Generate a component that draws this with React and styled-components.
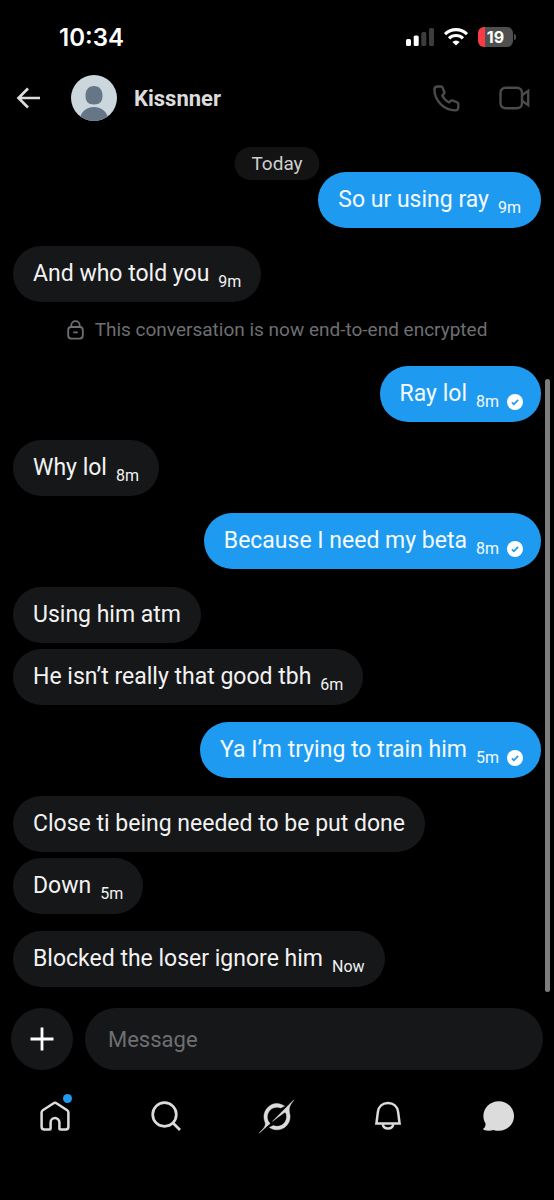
import { useState } from "react";
import styled, { createGlobalStyle, css } from "styled-components";

const GlobalStyle = createGlobalStyle`
  * {
    box-sizing: border-box;
  }

  body {
    margin: 0;
    background-color: #000;
    color: #e7e9ea;
    font-family: Roboto, "Liberation Sans", sans-serif;
  }

  button {
    display: flex;
    align-items: center;
    justify-content: center;
    padding: 0;
    border: none;
    background: none;
    color: inherit;
    cursor: pointer;
  }

  svg {
    display: block;
    flex-shrink: 0;
  }
`;

const Screen = styled.div`
  display: flex;
  flex-direction: column;
  min-height: 100vh;
`;

const StatusBar = styled.div`
  display: flex;
  align-items: center;
  justify-content: space-between;
  height: 74px;
  padding: 0 38px 0 59px;
  color: #fff;
`;

const Clock = styled.time`
  font-family: Inter, sans-serif;
  font-size: 24px;
  font-weight: 600;
`;

const StatusIcons = styled.div`
  display: flex;
  align-items: center;
  gap: 10px;
`;

const Battery = styled.div`
  display: flex;
  align-items: center;
  gap: 1px;
`;

const BatteryBody = styled.div`
  width: 35px;
  height: 20px;
  border-radius: 6px;
  background: linear-gradient(to right, #fb3b44 ${(props) => props.$level}%, #4f4f4f ${(props) => props.$level}%);
  font-family: Inter, sans-serif;
  font-size: 16px;
  font-weight: 700;
  line-height: 20px;
  text-align: center;
`;

const BatteryTip = styled.div`
  width: 2px;
  height: 6px;
  border-radius: 0 2px 2px 0;
  background-color: #4f4f4f;
`;

const Header = styled.header`
  display: flex;
  align-items: center;
  height: 48px;
  padding: 0 24px 0 16px;
`;

const Avatar = styled.div`
  width: 46px;
  height: 46px;
  margin: 0 17px 0 30px;
  border-radius: 50%;
  overflow: hidden;
`;

const Name = styled.h1`
  flex: 1;
  margin: 0;
  font-size: 22px;
  font-weight: 700;
  color: #dcdcdc;
`;

const HeaderActions = styled.div`
  display: flex;
  gap: 39px;
  color: #4b4b4b;
`;

const Chat = styled.main`
  position: relative;
  flex: 1;
  padding: 50px 13px 3px;
`;

const DayPill = styled.div`
  position: absolute;
  top: 25px;
  left: 50%;
  transform: translateX(-50%);
  padding: 0 17px;
  border-radius: 17px;
  background-color: #131314;
  color: #cfcfcf;
  font-size: 19px;
  line-height: 33px;
`;

const ScrollThumb = styled.div`
  position: absolute;
  top: 29%;
  right: 4px;
  bottom: 16px;
  width: 5px;
  border-radius: 3px;
  background-color: #7d7d7d;
`;

const Group = styled.div`
  display: flex;
  flex-direction: column;
  gap: 6px;
  align-items: ${(props) => (props.$mine ? "flex-end" : "flex-start")};
  margin-bottom: ${(props) => (props.$mine ? 18 : 17)}px;
`;

const Bubble = styled.div`
  display: flex;
  align-items: flex-end;
  gap: 9px;
  padding: 0 20px;
  border-radius: 28px;
  background-color: #161719;
  color: #f2f2f2;

  ${(props) =>
    props.$mine &&
    css`
      background-color: #1e9bf0;
      color: #f4faff;
    `}

  ${(props) =>
    props.$checked &&
    css`
      padding-right: 18px;
    `}
`;

const Text = styled.p`
  margin: 0;
  padding: 14px 0;
  font-size: 23px;
  line-height: 28px;
`;

const Meta = styled.span`
  display: flex;
  align-items: center;
  gap: 8px;
  padding-bottom: 10px;
  font-size: 16px;
  line-height: 20px;
`;

const Notice = styled.p`
  display: flex;
  align-items: center;
  justify-content: center;
  gap: 11px;
  margin: 0 0 25px;
  color: #6d6f72;
  font-size: 19px;
  line-height: 22px;
`;

const Composer = styled.form`
  display: flex;
  gap: 12px;
  padding: 0 11px;
`;

const AddButton = styled.button`
  flex-shrink: 0;
  width: 62px;
  height: 62px;
  border-radius: 50%;
  && {
    background-color: #161719;
  }
`;

const MessageInput = styled.input`
  flex: 1;
  min-width: 0;
  height: 62px;
  padding: 0 23px;
  border: none;
  border-radius: 31px;
  outline: none;
  background-color: #161719;
  color: #f2f2f2;
  font-family: inherit;
  font-size: 22px;

  &::placeholder {
    color: #6d6f72;
    opacity: 1;
  }
`;

const TabBar = styled.nav`
  display: grid;
  grid-template-columns: repeat(5, 1fr);
  padding: 26px 0 64px;
  color: #dcdcdc;
`;

const Tab = styled.button`
  height: 40px;
`;

const TabIcon = styled.span`
  position: relative;
`;

const Dot = styled.span`
  position: absolute;
  top: -7px;
  right: -2px;
  width: 9px;
  height: 9px;
  border-radius: 50%;
  background-color: #1e9bf0;
`;

const SignalIcon = () => (
  <svg width="28" height="18" viewBox="0 0 28 18" fill="#fff">
    <rect x="0" y="11" width="5" height="7" rx="1.5" />
    <rect x="7.7" y="7.5" width="5" height="10.5" rx="1.5" />
    <rect x="15.3" y="4" width="5" height="14" rx="1.5" fill="#3c3c3c" />
    <rect x="23" y="0" width="5" height="18" rx="1.5" fill="#3c3c3c" />
  </svg>
);

const WifiIcon = () => (
  <svg width="24" height="18" viewBox="0 0 24 18" fill="none" stroke="#fff" strokeWidth="3.1">
    <path d="M1 6.2a15.6 15.6 0 0 1 22 0" />
    <path d="M5 10.4a10 10 0 0 1 14 0" />
    <path d="M12 17.6 8.3 13.9a5.3 5.3 0 0 1 7.4 0z" fill="#fff" stroke="none" />
  </svg>
);

const BackIcon = () => (
  <svg width="25" height="22" viewBox="0 0 25 22" fill="none" stroke="#dcdcdc" strokeWidth="2.7">
    <path d="M12 1.5 2.5 11l9.5 9.5M2.5 11H24" />
  </svg>
);

const AvatarIcon = () => (
  <svg width="46" height="46" viewBox="0 0 46 46">
    <rect width="46" height="46" fill="#ccd6dd" />
    <path d="M23 11c5.5 0 8.5 4.2 8.5 9.5 0 6-2.5 9-8.5 9s-8.500-3-8.5-9c0-5.3 3-9.5 8.5-9.5z" fill="#657786" />
    <path d="M8.5 46c.5-8.500 6.500-14 14.500-14s14 5.500 14.500 14z" fill="#657786" />
  </svg>
);

const PhoneIcon = () => (
  <svg width="27" height="27" viewBox="0 0 27 27" fill="none" stroke="currentColor" strokeWidth="2.4" strokeLinejoin="round">
    <path d="M4.6 1.5H8Q9.200 1.500 9.600 2.600L11.300 7Q11.700 8.100 10.900 8.900L9.200 10.600C10.600 13.500 13 16 16 17.500L17.700 15.800Q18.500 15.100 19.600 15.500L24.200 17.300Q25.300 17.800 25.300 19V22.300Q25.300 25.500 22.100 25.400C10.800 25 1.800 16 1.400 4.800Q1.400 1.500 4.600 1.500Z" />
  </svg>
);

const VideoIcon = () => (
  <svg width="31" height="24" viewBox="0 0 31 24" fill="none" stroke="currentColor" strokeWidth="2.4">
    <rect x="1.5" y="1.7" width="21.5" height="20.6" rx="5" />
    <path d="M23 9.200 29.200 4.800V19.200L23 14.800" />
  </svg>
);

const LockIcon = () => (
  <svg width="17" height="20" viewBox="0 0 17 20" fill="none" stroke="currentColor" strokeWidth="1.8">
    <rect x="1.2" y="7" width="14.6" height="11.6" rx="3" />
    <path d="M4.300 7V5.400a4.200 4.200 0 0 1 8.400 0V7M6.200 12.300h4.600" />
  </svg>
);

const CheckIcon = () => (
  <svg width="16" height="16" viewBox="0 0 16 16">
    <circle cx="8" cy="8" r="8" fill="#fff" />
    <path d="m4.900 8.300 2 2 4.200-4.500" fill="none" stroke="#1e9bf0" strokeWidth="1.7" />
  </svg>
);

const PlusIcon = () => (
  <svg width="24" height="24" viewBox="0 0 24 24" fill="none" stroke="#fff" strokeWidth="2.8">
    <path d="M12 .5v23M.5 12h23" />
  </svg>
);

const HomeIcon = () => (
  <svg width="30" height="30" viewBox="0 0 30 30" fill="none" stroke="currentColor" strokeWidth="2.5" strokeLinejoin="round">
    <path d="M13.600 2.200 2.800 9.200Q1.600 10 1.600 11.400V25.700Q1.600 28.400 4.300 28.400H9.600Q10.600 28.400 10.600 27.400V21.500a4.400 4.400 0 0 1 8.800 0V27.400Q19.400 28.400 20.400 28.400H25.700Q28.400 28.400 28.400 25.700V11.400Q28.400 10 27.200 9.200L16.400 2.200Q15 1.300 13.600 2.200Z" />
  </svg>
);

const SearchIcon = () => (
  <svg width="30" height="30" viewBox="0 0 30 30" fill="none" stroke="currentColor" strokeWidth="2.7">
    <circle cx="13.5" cy="13.5" r="11.8" />
    <path d="m21.800 21.800 7.200 7.200" />
  </svg>
);

const GrokIcon = () => (
  <svg width="35" height="35" viewBox="0 0 24 24" fill="currentColor" stroke="currentColor" strokeWidth="0.3">
    <path d="M9.270 15.290l7.978-5.897c.391-.29.95-.177 1.137.272.98 2.369.542 5.215-1.410 7.169-1.951 1.954-4.667 2.382-7.149 1.406l-2.711 1.257c3.889 2.661 8.611 2.003 11.562-.953 2.341-2.344 3.066-5.539 2.388-8.420l.006.007c-.983-4.232.242-5.924 2.750-9.383l.179-.248-3.301 3.305v-.01L9.267 15.292M7.623 16.723c-2.792-2.670-2.310-6.801.071-9.184 1.761-1.763 4.647-2.483 7.166-1.425l2.705-1.250a7.808 7.808 0 0 0-1.829-1A8.975 8.975 0 0 0 5.984 5.830c-2.533 2.536-3.330 6.436-1.962 9.764 1.022 2.487-.653 4.246-2.340 6.022-.599.630-1.199 1.259-1.682 1.925l7.620-6.815" />
  </svg>
);

const BellIcon = () => (
  <svg width="30" height="30" viewBox="0 0 30 30" fill="none" stroke="currentColor" strokeWidth="2.5">
    <path d="M3.400 22.600 4.900 10.800C5.600 5.400 9.600 1.900 15 1.900S24.400 5.400 25.100 10.800L26.600 22.600Z" />
    <path d="M9.700 23.200a5.400 5.200 0 0 0 10.600 0" />
  </svg>
);

const MessagesIcon = () => (
  <svg width="31" height="30" viewBox="0 0 31 30" fill="currentColor">
    <path d="M15.700.2C24.200.2 31 6.700 31 15s-6.800 14.800-15.300 14.800c-1.900 0-3.600-.3-5.100-.9C7.500 29.900 3.500 29.900.6 28.700c-.6-.3-.6-.8-.1-1.200 1.700-1.500 2.300-3.300 1.900-5.200C1 20.100.4 17.700.4 15 .4 6.700 7.200.2 15.700.2z" />
  </svg>
);

const beforeNotice = [
  { mine: true, messages: [{ text: "So ur using ray", time: "9m" }] },
  { mine: false, messages: [{ text: "And who told you", time: "9m" }] },
];

const afterNotice = [
  { mine: true, messages: [{ text: "Ray lol", time: "8m", checked: true }] },
  { mine: false, messages: [{ text: "Why lol", time: "8m" }] },
  { mine: true, messages: [{ text: "Because I need my beta", time: "8m", checked: true }] },
  {
    mine: false,
    messages: [{ text: "Using him atm" }, { text: "He isn’t really that good tbh", time: "6m" }],
  },
  { mine: true, messages: [{ text: "Ya I’m trying to train him", time: "5m", checked: true }] },
  {
    mine: false,
    messages: [{ text: "Close ti being needed to be put done" }, { text: "Down", time: "5m" }],
  },
  { mine: false, messages: [{ text: "Blocked the loser ignore him", time: "Now" }] },
];

const tabs = [
  { label: "Home", Icon: HomeIcon, unread: true },
  { label: "Search", Icon: SearchIcon },
  { label: "Grok", Icon: GrokIcon },
  { label: "Notifications", Icon: BellIcon },
  { label: "Messages", Icon: MessagesIcon },
];

const Messages = ({ groups }) =>
  groups.map(({ mine, messages }, index) => (
    <Group key={index} $mine={mine}>
      {messages.map(({ text, time, checked }) => (
        <Bubble key={text} $mine={mine} $checked={checked}>
          <Text>{text}</Text>
          {time && (
            <Meta>
              {time}
              {checked && <CheckIcon />}
            </Meta>
          )}
        </Bubble>
      ))}
    </Group>
  ));

const App = () => {
  const [draft, setDraft] = useState("");

  const handleSubmit = (e) => {
    e.preventDefault();
    setDraft("");
  };

  return (
    <Screen>
      <GlobalStyle />
      <StatusBar>
        <Clock>10:34</Clock>
        <StatusIcons>
          <SignalIcon />
          <WifiIcon />
          <Battery>
            <BatteryBody $level={19}>19</BatteryBody>
            <BatteryTip />
          </Battery>
        </StatusIcons>
      </StatusBar>

      <Header>
        <button aria-label="Back">
          <BackIcon />
        </button>
        <Avatar>
          <AvatarIcon />
        </Avatar>
        <Name>Kissnner</Name>
        <HeaderActions>
          <button aria-label="Audio call">
            <PhoneIcon />
          </button>
          <button aria-label="Video call">
            <VideoIcon />
          </button>
        </HeaderActions>
      </Header>

      <Chat>
        <DayPill>Today</DayPill>
        <Messages groups={beforeNotice} />
        <Notice>
          <LockIcon />
          This conversation is now end-to-end encrypted
        </Notice>
        <Messages groups={afterNotice} />
        <ScrollThumb />
      </Chat>

      <Composer onSubmit={handleSubmit}>
        <AddButton type="button" aria-label="Add attachment">
          <PlusIcon />
        </AddButton>
        <MessageInput
          aria-label="Message"
          placeholder="Message"
          value={draft}
          onChange={(e) => setDraft(e.target.value)}
        />
      </Composer>

      <TabBar>
        {tabs.map(({ label, Icon, unread }) => (
          <Tab key={label} aria-label={label}>
            <TabIcon>
              <Icon />
              {unread && <Dot />}
            </TabIcon>
          </Tab>
        ))}
      </TabBar>
    </Screen>
  );
};

export default App;
